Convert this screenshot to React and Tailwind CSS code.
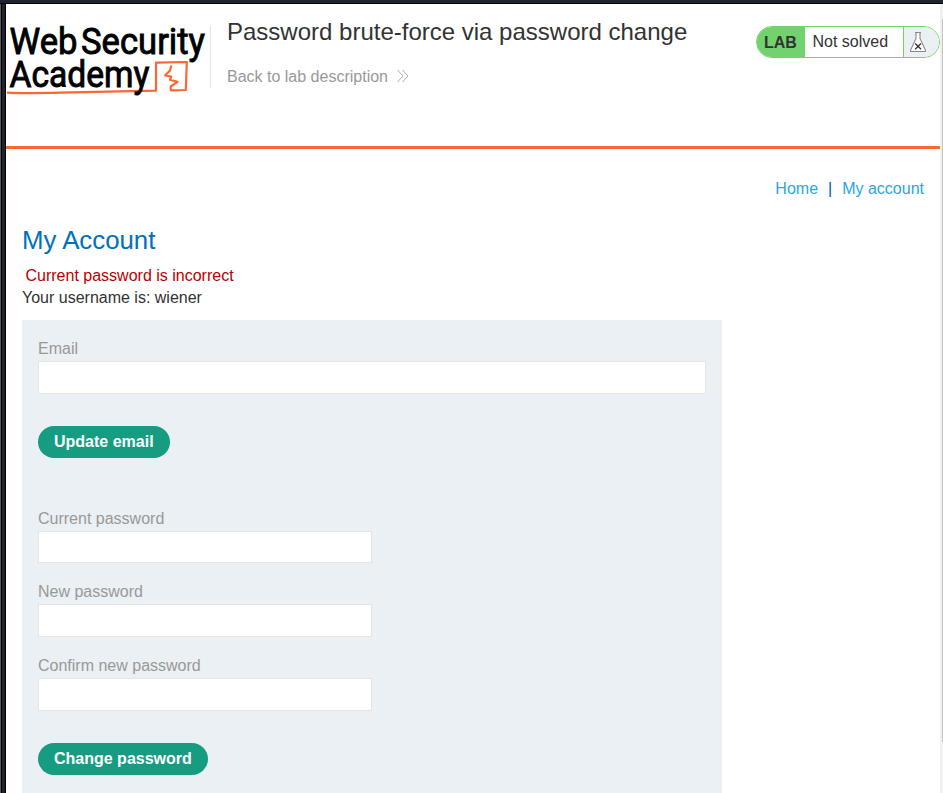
function Logo() {
  return (
    <svg width="206" height="92" viewBox="6 4 206 92" className="block shrink-0" fontFamily="Roboto, 'Liberation Sans', sans-serif" fontWeight="400">
      <path d="M7 92.600 Q22 93.500 60 92.700 T156 90.700 V62.700 L186.800 62 L185.800 90 L170.700 90.300 V86.500 L177.500 81.800 L170 79.800 L171.200 76.500 L165 75.500 L170 70.500 L171.300 65.500" fill="none" stroke="#ff6633" strokeWidth="2.200" strokeLinejoin="round" />
      <g fill="#000" stroke="#000" strokeWidth="0.900" fontSize="36.500">
        <text x="9.500" y="54" textLength="68" lengthAdjust="spacingAndGlyphs">Web</text>
        <text x="81" y="54" textLength="124" lengthAdjust="spacingAndGlyphs">Security</text>
        <text x="9.500" y="86.700" textLength="140" lengthAdjust="spacingAndGlyphs">Academy</text>
      </g>
    </svg>
  );
}

function Flask() {
  return (
    <svg width="16" height="21" viewBox="0 0 16 21" className="block">
      <path d="M5 .5 H11 M6 .5 V6.500 L.6 18 V19.500 H15.400 V18 L10 6.500 V.5" fill="#fff" stroke="#888" strokeWidth="1.100" />
      <path d="M5.200 11.500 L11 17.300 M11 11.500 L5.200 17.300" stroke="#333332" strokeWidth="1.300" />
    </svg>
  );
}

function Field({ label, className }) {
  return (
    <label className="block text-[#999]">
      <span className="block h-[23px] leading-[21px]">{label}</span>
      <input className={`block border border-[#e4e4e4] bg-white outline-none ${className}`} />
    </label>
  );
}

function Button({ children }) {
  return <button type="button" className="block h-8 rounded-full bg-[#169c80] px-4 pb-px font-bold text-white">{children}</button>;
}

export default function App() {
  return (
    <div className="flex h-[793px] w-[943px] flex-col overflow-hidden bg-white font-['Liberation_Sans',Arial,sans-serif] text-[16px] text-[#333332]">
      <div className="h-1 shrink-0 border-b border-black bg-[#20222d]" />
      <div className="flex min-h-0 flex-1">
        <div className="w-px bg-[#55575b]" />
        <div className="w-[5px] border-x border-black bg-[#20222d]" />
        <div className="w-[934px] overflow-hidden">
          <header className="flex h-[145px] items-start border-b-[3px] border-[#ff6633]">
            <Logo />
            <div className="mt-[22px] -ml-[2px] h-[62px] w-px bg-[#e4e4e4]" />
            <div className="ml-4 pt-3">
              <h1 className="text-[24px] leading-8 whitespace-nowrap">Password brute-force via password change</h1>
              <a className="mt-[18px] flex items-center text-[#999]">
                <span className="leading-[22px]">Back to lab description</span>
                <svg width="14" height="14" viewBox="0 0 14 14" className="mb-[2px] ml-2" fill="none" stroke="#aaa">
                  <path d="M1.500 1 L7 7 L1.500 13 M6.500 1 L12 7 L6.500 13" />
                </svg>
              </a>
            </div>
            <div className="mt-[22px] ml-auto flex h-8 overflow-hidden rounded-full border border-[#72d26e]">
              <div className="w-12 bg-[#72d26e] pl-[7px] font-bold leading-[32px]">LAB</div>
              <div className="w-[98px] pl-[7.500px] leading-[29px]">Not solved</div>
              <div className="flex w-9 items-center border-l border-[#72d26e] bg-[#eaf0f3] pl-1.5"><Flask /></div>
            </div>
          </header>
          <main className="px-4">
            <nav className="flex justify-end pt-[29px] leading-[22px] text-[#29a7df]">
              <a>Home</a><span className="mx-[10px] text-[#0055a5]">|</span><a>My account</a>
            </nav>
            <h2 className="mt-[25px] text-[25.800px] leading-[30px] text-[#0071bc]">My Account</h2>
            <p className="mt-[10px] pl-[3.500px] leading-[22px] text-[#b80000]">Current password is incorrect</p>
            <p className="leading-[22px]">Your username is: wiener</p>
            <section className="mt-[11px] h-[500px] w-[700px] bg-[#eaf0f3] px-4 pt-[18px]">
              <form>
                <Field label="Email" className="h-[33px] w-full" />
                <div className="mt-8"><Button>Update email</Button></div>
              </form>
              <form className="mt-[50px]">
                <div className="flex flex-col gap-[18px]">
                  <Field label="Current password" className="h-8 w-[334px]" />
                  <Field label="New password" className="h-[33px] w-[334px]" />
                  <Field label="Confirm new password" className="h-[33px] w-[334px]" />
                </div>
                <div className="mt-8"><Button>Change password</Button></div>
              </form>
            </section>
          </main>
        </div>
        <div className="flex w-[3px] justify-end bg-[#f0f0f0] pt-[15px]">
          <div className="h-[723px] w-px bg-[#c1c1c1]" />
        </div>
      </div>
    </div>
  );
}
